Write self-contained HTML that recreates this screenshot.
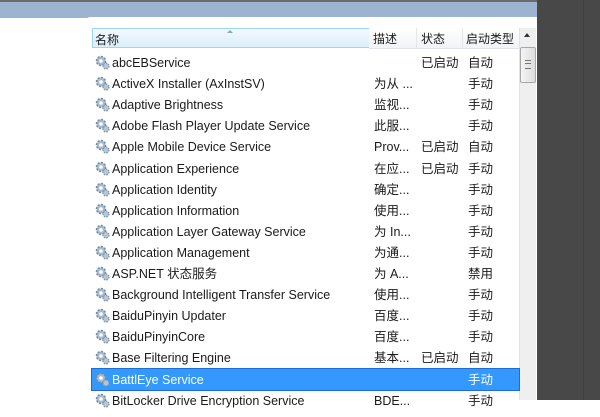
<!DOCTYPE html>
<html><head><meta charset="utf-8"><style>
body{margin:0;width:600px;height:400px;overflow:hidden;background:#fff;position:relative;font-family:"Liberation Sans","Noto Sans CJK SC",sans-serif;font-size:12.5px;color:#1a1a1a}
.top{position:absolute;left:0;top:0;width:537px;height:2px;background:#6b6b6b}
.band{position:absolute;left:0;top:2px;width:537px;height:16px;background:#9db4d0}
.dark{position:absolute;left:537px;top:0;width:63px;height:400px;background:#484848}
.dline{position:absolute;left:583px;top:0;width:1px;height:400px;background:#404040}
.panel{position:absolute;left:83px;top:17px;width:454px;height:400px;background:#fff;border-top-left-radius:8px}
.hdr{position:absolute;top:28px;height:20px;border-bottom:1px solid #e0e4ea;background:linear-gradient(#fff,#f1f3f6)}
.hdr span{position:absolute;top:0;font-size:12px;line-height:22px;height:20px}
.row{position:absolute;left:92px;width:427px;height:21px}
.row span{position:absolute;top:1px;line-height:21px;height:21px}
.row .ic{position:absolute;left:3px;top:3px;width:15px;height:15px}
.row .n{left:20px}
.row .d{left:282px}
.row .s{left:329px}
.row .t{left:376px}
.sel{background:#3399ff;color:#fff;outline:1px solid #1c6fd0}
.sb{position:absolute;left:519px;top:28px;width:16px;height:372px;background:#efefef;border-left:1px solid #e2e2e2}
.thumb{position:absolute;left:520px;top:47px;width:14px;height:34px;border:1px solid #a8a8a8;border-radius:2px;background:linear-gradient(90deg,#f4f4f4,#dcdcdc)}
</style></head><body>
<div class="top"></div><div class="band"></div>
<div class="dark"></div><div class="dline"></div>
<div class="panel"></div>
<div class="hdr" style="left:92px;width:276px;background:linear-gradient(#f3f9fd,#dbeefa);border:1px solid #9ed3f2;height:18px"><span style="left:2px">名称</span><div style="position:absolute;left:134px;top:1px;width:0;height:0;border-left:3px solid transparent;border-right:3px solid transparent;border-bottom:3px solid #8aa"></div></div>
<div class="hdr" style="left:369px;width:47px;border-right:1px solid #e6e6e6"><span style="left:4px">描述</span></div>
<div class="hdr" style="left:417px;width:45px;border-right:1px solid #e6e6e6"><span style="left:4px">状态</span></div>
<div class="hdr" style="left:463px;width:56px"><span style="left:3px">启动类型</span></div>
<div class="sb"></div>
<div style="position:absolute;left:524px;top:33px;width:0;height:0;border-left:3px solid transparent;border-right:3px solid transparent;border-bottom:4px solid #333"></div>
<div class="thumb"><div style="position:absolute;left:4px;top:12px;width:6px;height:7px;border-top:1px solid #777;border-bottom:1px solid #777"></div><div style="position:absolute;left:4px;top:15px;width:6px;height:1px;background:#777"></div></div>
<svg width="0" height="0" style="position:absolute"><defs><g id="g"><circle cx="6" cy="6" r="4.5" fill="#a9bccd" stroke="#6f8aa3" stroke-width="1.5" stroke-dasharray="2 1.5"/><circle cx="6" cy="6" r="1.8" fill="#fff"/><circle cx="11" cy="11" r="3" fill="#b8c6d4" stroke="#7790a8" stroke-width="1.2" stroke-dasharray="1.5 1.2"/></g></defs></svg>
<div id="rows"></div>
<script>
var d=[["abcEBService","","已启动","自动"],["ActiveX Installer (AxInstSV)","为从 ...","","手动"],["Adaptive Brightness","监视...","","手动"],["Adobe Flash Player Update Service","此服...","","手动"],["Apple Mobile Device Service","Prov...","已启动","自动"],["Application Experience","在应...","已启动","手动"],["Application Identity","确定...","","手动"],["Application Information","使用...","","手动"],["Application Layer Gateway Service","为 In...","","手动"],["Application Management","为通...","","手动"],["ASP.NET 状态服务","为 A...","","禁用"],["Background Intelligent Transfer Service","使用...","","手动"],["BaiduPinyin Updater","百度...","","手动"],["BaiduPinyinCore","百度...","","手动"],["Base Filtering Engine","基本...","已启动","自动"],["BattlEye Service","","","手动"],["BitLocker Drive Encryption Service","BDE...","","手动"]];
var h="";d.forEach(function(r,i){var t=52+i*21.1;h+='<div class="row'+(i==15?' sel':'')+'" style="top:'+t+'px"><svg class="ic" viewBox="0 0 15 15"><use href="#g"/></svg><span class="n">'+r[0]+'</span><span class="d">'+r[1]+'</span><span class="s">'+r[2]+'</span><span class="t">'+r[3]+'</span></div>';});
document.getElementById("rows").innerHTML=h;
</script>
</body></html>
